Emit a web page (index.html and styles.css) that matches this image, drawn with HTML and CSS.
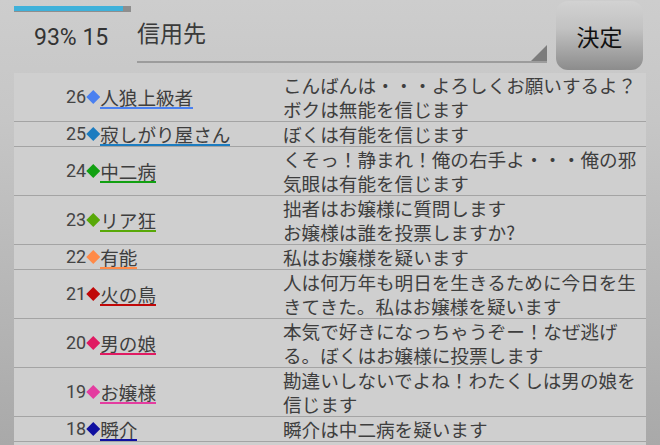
FILE: index.html
```html
<!DOCTYPE html>
<html lang="ja">
<head>
<meta charset="utf-8">
<link rel="stylesheet" href="styles.css">
</head>
<body>
<div class="screen">
  <header class="header">
    <div class="status">
      <div class="progress"><div class="progress-fill" style="width:93%"></div></div>
      <div class="stats">93% 15</div>
    </div>
    <div class="spinner"><span class="spinner-text">信用先</span></div>
    <button class="btn">決定</button>
  </header>
  <div class="list">
    <div class="row">
      <div class="who"><span class="num">26</span><span class="dia c26"></span><span class="name u26">人狼上級者</span></div>
      <div class="msg">こんばんは・・・よろしくお願いするよ？ボクは無能を信じます</div>
    </div>
    <div class="row">
      <div class="who"><span class="num">25</span><span class="dia c25"></span><span class="name u25">寂しがり屋さん</span></div>
      <div class="msg">ぼくは有能を信じます</div>
    </div>
    <div class="row">
      <div class="who"><span class="num">24</span><span class="dia c24"></span><span class="name u24">中二病</span></div>
      <div class="msg">くそっ！静まれ！俺の右手よ・・・俺の邪気眼は有能を信じます</div>
    </div>
    <div class="row">
      <div class="who"><span class="num">23</span><span class="dia c23"></span><span class="name u23">リア狂</span></div>
      <div class="msg">拙者はお嬢様に質問します<br>お嬢様は誰を投票しますか?</div>
    </div>
    <div class="row">
      <div class="who"><span class="num">22</span><span class="dia c22"></span><span class="name u22">有能</span></div>
      <div class="msg">私はお嬢様を疑います</div>
    </div>
    <div class="row">
      <div class="who"><span class="num">21</span><span class="dia c21"></span><span class="name u21">火の鳥</span></div>
      <div class="msg">人は何万年も明日を生きるために今日を生きてきた。私はお嬢様を疑います</div>
    </div>
    <div class="row">
      <div class="who"><span class="num">20</span><span class="dia c20"></span><span class="name u20">男の娘</span></div>
      <div class="msg">本気で好きになっちゃうぞー！なぜ逃げる。ぼくはお嬢様に投票します</div>
    </div>
    <div class="row">
      <div class="who"><span class="num">19</span><span class="dia c19"></span><span class="name u19">お嬢様</span></div>
      <div class="msg">勘違いしないでよね！わたくしは男の娘を信じます</div>
    </div>
    <div class="row">
      <div class="who"><span class="num">18</span><span class="dia c18"></span><span class="name u18">瞬介</span></div>
      <div class="msg">瞬介は中二病を疑います</div>
    </div>
  </div>
</div>
</body>
</html>
```

FILE: styles.css
```css
html, body {
  margin: 0;
  padding: 0;
}
body {
  width: 660px;
  height: 445px;
  overflow: hidden;
  background: linear-gradient(to bottom, #cdcdcd 0, #c6c6c6 120px, #a9a9a9 445px);
  font-family: "Noto Sans CJK JP", "Noto Sans", sans-serif;
  color: #3e3e3e;
}
.screen {
  width: 660px;
  height: 445px;
  display: flex;
  flex-direction: column;
}
.header {
  height: 73px;
  display: flex;
  align-items: flex-start;
  padding-left: 14px;
  box-sizing: border-box;
}
.status {
  width: 123px;
  display: flex;
  flex-direction: column;
}
.progress {
  margin-top: 6px;
  width: 117px;
  height: 6px;
  background: #8e8e8e;
}
.progress-fill {
  height: 5px;
  background: #3fb1da;
}
.stats {
  margin-top: 13px;
  padding-left: 20px;
  font-family: Roboto, "Liberation Sans", sans-serif;
  font-size: 23px;
  line-height: 26px;
  color: #333;
}
.spinner {
  position: relative;
  width: 410px;
  height: 61px;
  border-bottom: 2px solid #9c9c9c;
  box-sizing: content-box;
}
.spinner-text {
  display: block;
  padding-top: 19px;
  font-size: 23px;
  line-height: 27px;
  color: #3a3a3a;
}
.spinner::after {
  content: "";
  position: absolute;
  right: 0;
  bottom: 0;
  width: 16px;
  height: 16px;
  background: #7c7c7c;
  clip-path: polygon(100% 0, 100% 100%, 0 100%);
}
.btn {
  margin-left: 9px;
  margin-top: 1px;
  width: 87px;
  height: 69px;
  border: none;
  border-radius: 12px;
  background: linear-gradient(to bottom, #d2d2d2 0%, #c2c2c2 40%, #8c8c8c 100%);
  font-family: "Noto Sans CJK JP", sans-serif;
  font-size: 23px;
  color: #111;
  padding: 0;
}
.list {
  margin-left: 14px;
  width: 632px;
  flex: 1;
  background: #cfcfcf;
}
.row {
  display: grid;
  grid-template-columns: 269px 1fr;
  border-bottom: 1px solid #a4a4a4;
}
.who {
  display: flex;
  align-items: center;
  padding-left: 52px;
}
.num {
  font-family: Roboto, "Liberation Sans", sans-serif;
  font-size: 18px;
  line-height: 20px;
  color: #444;
}
.dia {
  width: 14px;
  height: 14px;
  clip-path: polygon(50% 0, 100% 50%, 50% 100%, 0 50%);
}
.name {
  font-size: 18.6px;
  line-height: 20px;
  padding-top: 2px;
  border-bottom: 2px solid;
  color: #3e3e3e;
}
.msg {
  font-size: 18.6px;
  line-height: 24px;
  color: #3e3e3e;
}
.c26 { background: #4a80f0; }
.u26 { border-color: #4a80f0; }
.c25 { background: #1c7cc0; }
.u25 { border-color: #1c7cc0; }
.c24 { background: #12a012; }
.u24 { border-color: #12a012; }
.c23 { background: #58a808; }
.u23 { border-color: #58a808; }
.c22 { background: #ff8a48; }
.u22 { border-color: #ff8a48; }
.c21 { background: #c00808; }
.u21 { border-color: #c00808; }
.c20 { background: #e01a62; }
.u20 { border-color: #e01a62; }
.c19 { background: #e43ca0; }
.u19 { border-color: #e43ca0; }
.c18 { background: #1010a0; }
.u18 { border-color: #1010a0; }
```
